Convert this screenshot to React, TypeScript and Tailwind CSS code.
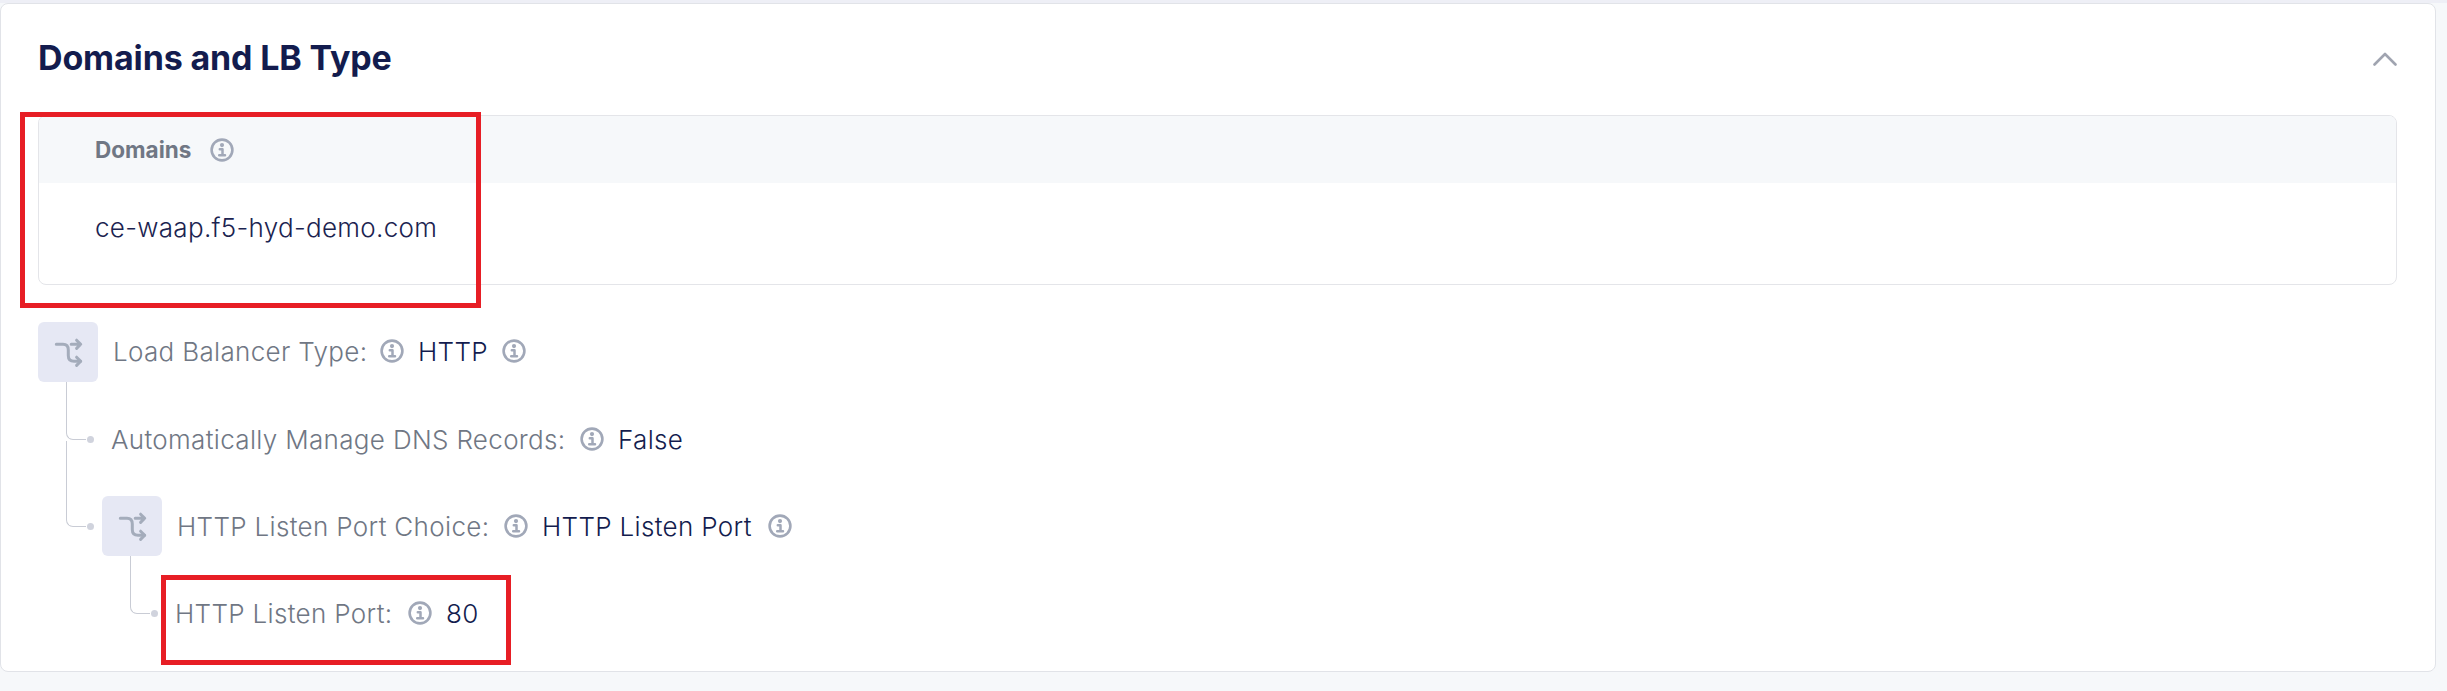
import type { ReactNode } from "react";

function InfoIcon({ className = "" }: { className?: string }) {
  return (
    <svg viewBox="0 0 24 24" className={`h-6 w-6 shrink-0 text-[#a1a8b8] ${className}`} fill="none" stroke="currentColor">
      <circle cx="12" cy="12" r="10.4" strokeWidth="2.6" />
      <circle cx="12" cy="7.1" r="2.1" fill="currentColor" stroke="none" />
      <path d="M9.8 11.2h2.7v5.9M9.2 17.2h5.8" strokeWidth="2.5" strokeLinecap="round" strokeLinejoin="round" />
    </svg>
  );
}

function BranchBadge() {
  return (
    <div className="flex h-[60px] w-[60px] shrink-0 items-center justify-center rounded-md bg-[#e6e8f4]">
      <svg viewBox="0 0 60 60" className="h-[60px] w-[60px]" fill="none" stroke="#a4acbb" strokeWidth="3" strokeLinecap="round" strokeLinejoin="round">
        <path d="M18.3 22.3H25Q30.3 22.3 30.3 28V33.5Q30.3 39.3 36 39.3H42.5" />
        <path d="M33.2 22.3H42.5M38.6 18.2L42.7 22.3L38.6 26.4M38.6 35.2L42.7 39.3L38.6 43.4" />
      </svg>
    </div>
  );
}

function Connector({ className }: { className: string }) {
  return (
    <div className={`absolute w-5 rounded-bl-[7px] border-b border-l border-[#c9ccd5] ${className}`}>
      <span className="absolute -right-2 -bottom-1 h-[7px] w-[7px] rounded-full bg-[#d0d3dd]" />
    </div>
  );
}

function Label({ className, children }: { className: string; children: ReactNode }) {
  return <span className={`shrink-0 text-[#707784] ${className}`}>{children}</span>;
}

export default function App() {
  return (
    <div className="h-[691px] w-[2447px] overflow-hidden bg-[#f6f8fa] font-['Inter',sans-serif] whitespace-nowrap">
      <div className="h-[3px] bg-[#eeeff6]" />
      <section className="relative h-[669px] w-[2436px] rounded-lg border border-[#e1e3e8] bg-white">
        <header className="flex h-[111px] items-start justify-between pr-[38px] pl-[37px]">
          <h2 className="pt-[33px] text-[34px] leading-[42px] font-bold tracking-[-0.15px] text-[#131c4e]">Domains and LB Type</h2>
          <svg viewBox="0 0 24 14" className="mt-[48px] h-[14px] w-6" fill="none" stroke="#a0a4b0" strokeWidth="2.6" strokeLinecap="round" strokeLinejoin="round">
            <path d="M1.5 12.5L12 2L22.5 12.5" />
          </svg>
        </header>

        <div className="ml-[37px] h-[170px] w-[2359px] overflow-hidden rounded-lg border border-[#e4e5e9]">
          <div className="flex h-[67px] items-center bg-[#f6f8fa] pl-[56px]">
            <span className="w-[115px] text-[22.5px] font-bold text-[#707784]">Domains</span>
            <InfoIcon />
          </div>
          <div className="pt-[30px] pl-[56px] text-[26px] leading-[30px] font-light tracking-[0.3px] text-[#1b2350]">ce-waap.f5-hyd-demo.com</div>
        </div>

        <div className="flex flex-col gap-[27px] pt-[37px] pl-[37px] text-[26px] leading-[60px] font-light tracking-[0.33px] text-[#131c4e]">
          <div className="flex h-[60px] items-center">
            <BranchBadge />
            <Label className="ml-[15px] w-[267px]">Load Balancer Type:</Label>
            <InfoIcon className="mb-[2px]" />
            <span className="ml-[14px] w-[84px]">HTTP</span>
            <InfoIcon className="mb-[2px]" />
          </div>
          <div className="relative flex h-[60px] items-center">
            <Connector className="-top-[27px] left-[28px] h-[58px]" />
            <Label className="ml-[73px] w-[469px] pt-[2px]">Automatically Manage DNS Records:</Label>
            <InfoIcon />
            <span className="ml-[14px] pt-[2px]">False</span>
          </div>
          <div className="relative flex h-[60px] items-center pl-[64px]">
            <Connector className="-top-[55px] left-[28px] h-[86px]" />
            <BranchBadge />
            <Label className="ml-[15px] w-[327px] pt-[2px]">HTTP Listen Port Choice:</Label>
            <InfoIcon />
            <span className="ml-[14px] w-[226px] pt-[2px]">HTTP Listen Port</span>
            <InfoIcon />
          </div>
          <div className="relative flex h-[60px] items-center">
            <Connector className="-top-[27px] left-[92px] h-[58px]" />
            <Label className="ml-[137px] w-[233px] pt-[2px]">HTTP Listen Port:</Label>
            <InfoIcon />
            <span className="ml-[14px] pt-[2px]">80</span>
          </div>
        </div>

        <div className="absolute top-[108px] left-[19px] h-[196px] w-[461px] border-[5px] border-[#e71e25]" />
        <div className="absolute top-[571px] left-[160px] h-[90px] w-[350px] border-[5px] border-[#e71e25]" />
      </section>
    </div>
  );
}
